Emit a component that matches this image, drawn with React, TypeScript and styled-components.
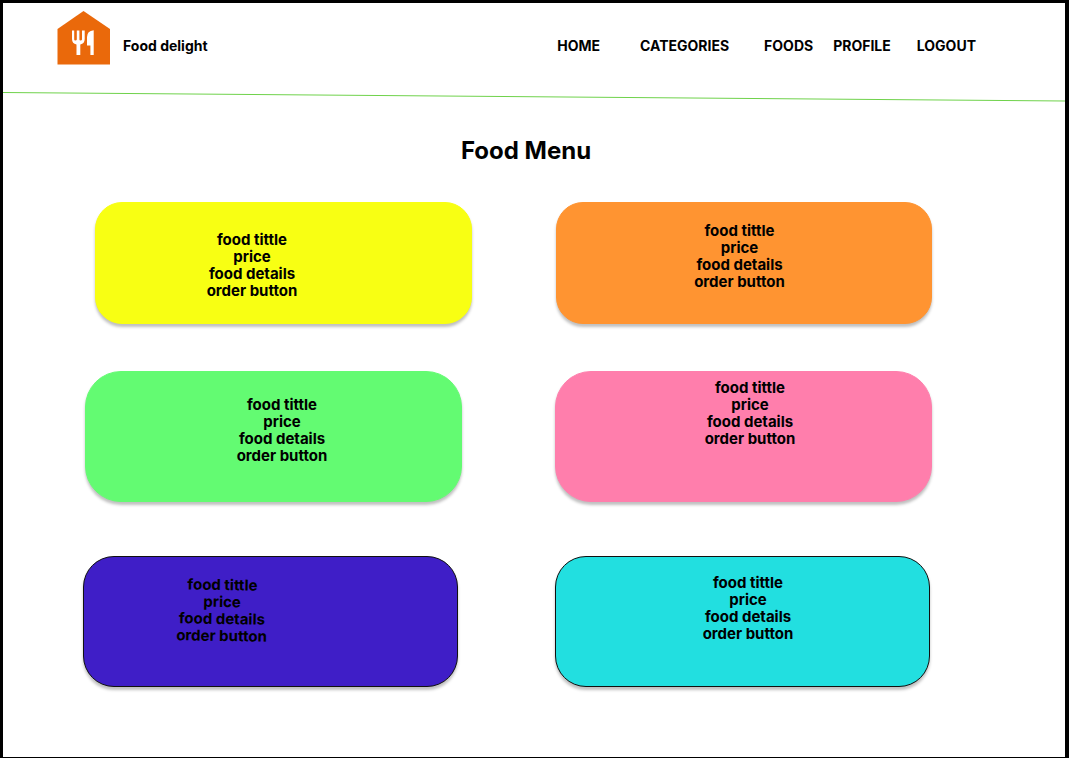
import React from "react";
import styled, { createGlobalStyle } from "styled-components";

const GlobalStyle = createGlobalStyle`
  *, *::before, *::after { box-sizing: border-box; }
  body {
    margin: 0;
    background: #fff;
    color: #000;
    font-family: Inter, "Liberation Sans", sans-serif;
    font-size: 14px;
    font-weight: 700;
    line-height: 17px;
  }
`;

const Page = styled.div`
  min-height: 100vh;
  border: solid #000;
  border-width: 3px 4px 1px 3px;
`;

const Header = styled.header`
  display: flex;
  align-items: flex-start;
  justify-content: space-between;
  height: 89px;
  padding: 8px 89px 0 54px;
`;

const Brand = styled.a`
  display: flex;
  gap: 13px;
  color: inherit;
  text-decoration: none;
`;

const BrandName = styled.span`
  padding-top: 26px;
`;

const Nav = styled.nav`
  display: flex;
  padding-top: 26px;
`;

const NavLink = styled.a<{ $gap: number }>`
  margin-left: ${(p) => p.$gap}px;
  color: inherit;
  text-decoration: none;
`;

const Divider = styled.svg`
  display: block;
  width: 100%;
  height: 10px;
`;

const Title = styled.h1`
  margin: 34px 16px 0 0;
  font-size: 24px;
  line-height: 30px;
  text-align: center;
`;

const Row = styled.section<{ $top: number; $left: number; $gap: number; $right: number }>`
  display: grid;
  grid-template-columns: repeat(2, minmax(0, 1fr));
  gap: ${(p) => p.$gap}px;
  margin-top: ${(p) => p.$top}px;
  padding: 0 ${(p) => p.$right}px 0 ${(p) => p.$left}px;
`;

const Card = styled.article<{
  $color: string;
  $height: number;
  $radius: number;
  $outlined: boolean;
  $x: number;
  $y: number;
}>`
  min-height: ${(p) => p.$height}px;
  padding: ${(p) => p.$y}px 0 0 ${(p) => p.$x}px;
  border: 1px solid ${(p) => (p.$outlined ? "#101010" : p.$color)};
  border-radius: ${(p) => p.$radius}px;
  background: ${(p) => p.$color};
  box-shadow: 0 3px 3px rgba(0, 0, 0, 0.25);
`;

const Details = styled.div<{ $tilt: number }>`
  display: flex;
  flex-direction: column;
  align-items: center;
  width: 120px;
  font-size: 15px;
  transform: ${(p) => (p.$tilt ? `rotate(${p.$tilt}deg)` : "none")};
`;

const FoodTitle = styled.h2`
  margin: 0;
  font-size: 15px;
  line-height: 17px;
`;

const Line = styled.p`
  margin: 0;
`;

const OrderButton = styled.button`
  padding: 0;
  border: 0;
  background: none;
  color: inherit;
  font: inherit;
  cursor: pointer;
`;

const links = [
  { label: "HOME", gap: 0 },
  { label: "CATEGORIES", gap: 40 },
  { label: "FOODS", gap: 35 },
  { label: "PROFILE", gap: 20 },
  { label: "LOGOUT", gap: 26 },
];

const rows = [
  {
    top: 36, left: 92, gap: 84, right: 133, height: 122, radius: 27, outlined: false,
    cards: [
      { color: "#f8ff13", x: 96, y: 28, tilt: 0 },
      { color: "#ff9431", x: 123, y: 19, tilt: 0 },
    ],
  },
  {
    top: 47, left: 82, gap: 93, right: 133, height: 131, radius: 36, outlined: false,
    cards: [
      { color: "#63fb72", x: 136, y: 24, tilt: 0 },
      { color: "#ff7eac", x: 134, y: 7, tilt: 0 },
    ],
  },
  {
    top: 54, left: 80, gap: 97, right: 135, height: 131, radius: 31, outlined: true,
    cards: [
      { color: "#3f1ec7", x: 78, y: 19, tilt: 1 },
      { color: "#22dfe0", x: 132, y: 17, tilt: 0 },
    ],
  },
];

function Logo() {
  return (
    <svg width="53" height="54" viewBox="0 0 53 54" aria-hidden="true">
      <path d="M0.5 18 L26.5 0 L53 18 V53.5 H0.5 Z" fill="#ea690b" />
      <path
        d="M15 19.5 H17.2 V28.5 Q17.2 29.5 18.2 29.5 Q19.8 29.5 19.8 28.5 V19.5 H22.4 V28.5 Q22.4 29.5 23.4 29.5 Q25 29.5 25 28.5 V19.5 H27.7 V28 Q27.7 32.5 23.3 33.5 V44 H19.5 V33.5 Q15 32.5 15 28 Z"
        fill="#fff"
      />
      <path d="M36.7 19.2 V44 H33.4 V34.5 H30 V26 Q30 20 36.7 19.2 Z" fill="#fff" />
    </svg>
  );
}

export default function App() {
  return (
    <>
      <GlobalStyle />
      <Page>
        <Header>
          <Brand href="#">
            <Logo />
            <BrandName>Food delight</BrandName>
          </Brand>
          <Nav>
            {links.map((link) => (
              <NavLink key={link.label} href="#" $gap={link.gap}>
                {link.label}
              </NavLink>
            ))}
          </Nav>
        </Header>
        <Divider viewBox="0 0 1062 10" preserveAspectRatio="none" aria-hidden="true">
          <line x1="0" y1="0.5" x2="1062" y2="9" stroke="#6fd24b" strokeWidth="1" />
        </Divider>
        <main>
          <Title>Food Menu</Title>
          {rows.map((row) => (
            <Row key={row.left} $top={row.top} $left={row.left} $gap={row.gap} $right={row.right}>
              {row.cards.map((card) => (
                <Card
                  key={card.color}
                  $color={card.color}
                  $height={row.height}
                  $radius={row.radius}
                  $outlined={row.outlined}
                  $x={card.x}
                  $y={card.y}
                >
                  <Details $tilt={card.tilt}>
                    <FoodTitle>food tittle</FoodTitle>
                    <Line>price</Line>
                    <Line>food details</Line>
                    <OrderButton type="button">order button</OrderButton>
                  </Details>
                </Card>
              ))}
            </Row>
          ))}
        </main>
      </Page>
    </>
  );
}
